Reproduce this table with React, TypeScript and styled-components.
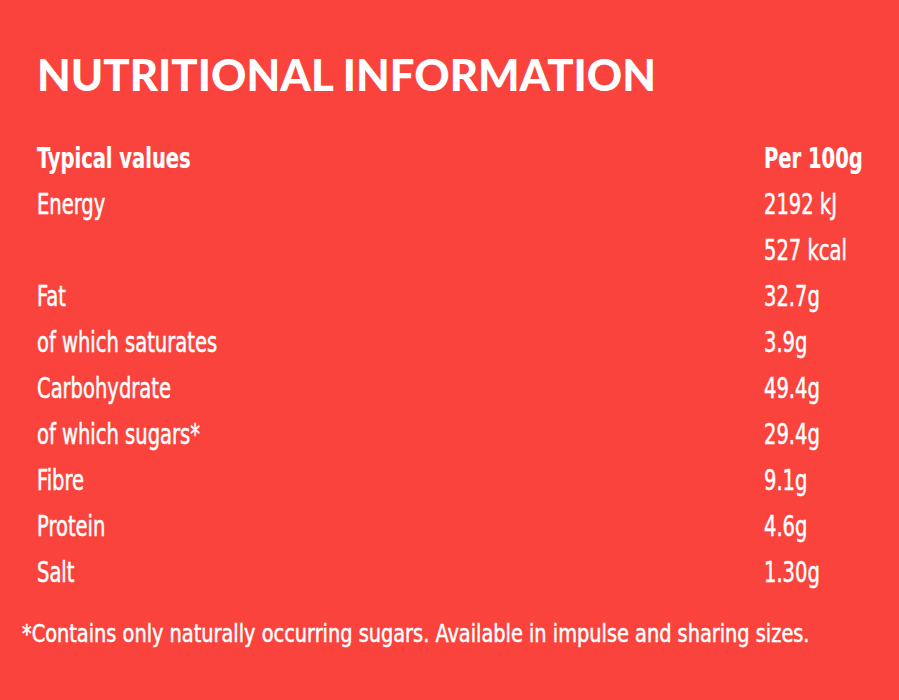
import React from "react";
import styled, { createGlobalStyle } from "styled-components";

const Global = createGlobalStyle`
  html, body { margin: 0; padding: 0; background: #fa433d; }
`;

const Panel = styled.section`
  width: 899px;
  height: 700px;
  box-sizing: border-box;
  background: #fa433d;
  color: #ffffff;
  padding: 46px 22px 0 22px;
`;

const Title = styled.h1`
  margin: 0 0 0 15px;
  font-family: "Lato", "Inter", sans-serif;
  font-weight: 900;
  font-size: 43.7px;
  line-height: 56px;
  letter-spacing: 0;
`;

const Table = styled.div`
  display: grid;
  grid-template-columns: 727px 1fr;
  margin: 34px 0 0 15px;
`;

const Cell = styled.div<{ $head?: boolean }>`
  font-family: "DejaVu Sans Condensed", "DejaVu Sans", sans-serif;
  font-weight: ${(p) => (p.$head ? 700 : 400)};
  font-size: 28px;
  line-height: 46px;
  height: 46px;
  white-space: nowrap;
  -webkit-text-stroke: ${(p) => (p.$head ? "0.2px" : "0.5px")} #ffffff;
`;

const Narrow = styled.span<{ $scale: number }>`
  display: inline-block;
  transform: scaleX(${(p) => p.$scale});
  transform-origin: left center;
  white-space: nowrap;
`;

const Note = styled.p`
  margin: 22px 0 0 0;
  font-family: "DejaVu Sans Condensed", "DejaVu Sans", sans-serif;
  font-size: 25px;
  line-height: 32px;
  white-space: nowrap;
  -webkit-text-stroke: 0.5px #ffffff;
`;

const rows: [string, string][] = [
  ["Energy", "2192 kJ"],
  ["", "527 kcal"],
  ["Fat", "32.7g"],
  ["of which saturates", "3.9g"],
  ["Carbohydrate", "49.4g"],
  ["of which sugars*", "29.4g"],
  ["Fibre", "9.1g"],
  ["Protein", "4.6g"],
  ["Salt", "1.30g"],
];

export default function App() {
  return (
    <>
      <Global />
      <Panel>
        <Title>NUTRITIONAL INFORMATION</Title>
        <Table>
          <Cell $head>
            <Narrow $scale={0.775}>Typical values</Narrow>
          </Cell>
          <Cell $head>
            <Narrow $scale={0.775}>Per 100g</Narrow>
          </Cell>
          {rows.map(([k, v], i) => (
            <React.Fragment key={i}>
              <Cell>
                <Narrow $scale={0.775}>{k}</Narrow>
              </Cell>
              <Cell>
                <Narrow $scale={0.775}>{v}</Narrow>
              </Cell>
            </React.Fragment>
          ))}
        </Table>
        <Note>
          <Narrow $scale={0.86}>
            *Contains only naturally occurring sugars. Available in impulse and sharing sizes.
          </Narrow>
        </Note>
      </Panel>
    </>
  );
}
